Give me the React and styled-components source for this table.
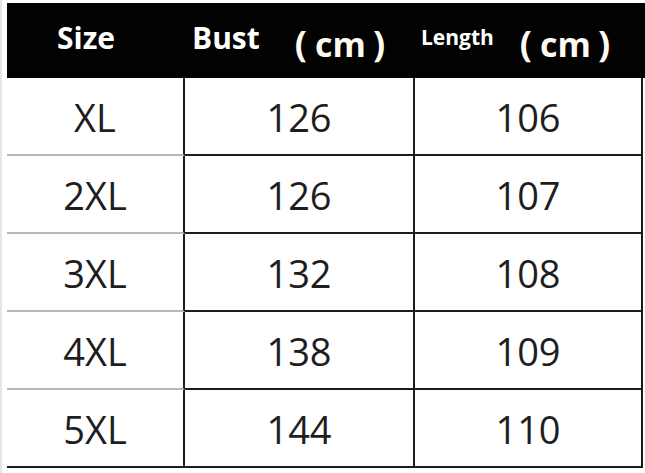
import React from 'react';
import styled, { createGlobalStyle } from 'styled-components';

const rows = [
  { size: 'XL', bust: 126, length: 106 },
  { size: '2XL', bust: 126, length: 107 },
  { size: '3XL', bust: 132, length: 108 },
  { size: '4XL', bust: 138, length: 109 },
  { size: '5XL', bust: 144, length: 110 },
];

const UnitLabel = ({ gap }) => (
  <Unit $gap={gap}>
    <Paren $side="left">(</Paren>cm<Paren $side="right">)</Paren>
  </Unit>
);

export default function App() {
  return (
    <Page>
      <GlobalStyle />
      <Table>
        <Header>
          <HeadCell $center>
            <HeadLabel>Size</HeadLabel>
          </HeadCell>
          <HeadCell>
            <HeadLabel $pad={7}>Bust</HeadLabel>
            <UnitLabel gap={35} />
          </HeadCell>
          <HeadCell>
            <SmallLabel>Length</SmallLabel>
            <UnitLabel gap={26} />
          </HeadCell>
        </Header>
        {rows.map((row, i) => (
          <Row key={row.size}>
            <Cell $muted={i < rows.length - 1}>{row.size}</Cell>
            <Cell>{row.bust}</Cell>
            <Cell>{row.length}</Cell>
          </Row>
        ))}
      </Table>
    </Page>
  );
}

const GlobalStyle = createGlobalStyle`
  html, body {
    margin: 0;
    padding: 0;
    background: #fff;
  }
  body {
    font-family: "Open Sans", "Liberation Sans", sans-serif;
  }
`;

const Page = styled.div`
  width: 645px;
  height: 473px;
  box-sizing: border-box;
  padding: 3px 0 0 5px;
  background: #fff;
  border-left: 2px solid #e4e4e4;
  overflow: hidden;
`;

const Table = styled.div`
  width: 638px;
  display: flex;
  flex-direction: column;
`;

const Header = styled.div`
  display: grid;
  grid-template-columns: 178px 230px 228px;
  height: 75px;
  background: #020202;
  color: #fff;
  font-weight: 700;
`;

const HeadCell = styled.div`
  display: flex;
  align-items: center;
  justify-content: ${p => (p.$center ? 'center' : 'flex-start')};
  padding-right: ${p => (p.$center ? '20px' : '0')};
`;

const HeadLabel = styled.span`
  font-size: 30px;
  line-height: 1;
  padding-left: ${p => p.$pad || 0}px;
  margin-bottom: 6px;
`;

const SmallLabel = styled.span`
  font-size: 21px;
  line-height: 1;
  padding-left: 6px;
  margin-bottom: 6px;
`;

const Unit = styled.span`
  font-size: 34px;
  line-height: 1;
  margin-left: ${p => p.$gap}px;
  margin-top: 6px;
  color: #fffaf0;
`;

const Paren = styled.span`
  font-size: 36px;
  margin-right: ${p => (p.$side === 'left' ? '8px' : '0')};
  margin-left: ${p => (p.$side === 'right' ? '7px' : '0')};
`;

const Row = styled.div`
  display: grid;
  grid-template-columns: 178px 230px 228px;
  height: 78px;
`;

const Cell = styled.div`
  box-sizing: border-box;
  display: flex;
  align-items: center;
  justify-content: center;
  border-right: 2px solid #1c1c1c;
  border-bottom: 2px solid ${p => (p.$muted ? '#b8b8b8' : '#1c1c1c')};
  font-size: 38px;
  color: #1e1e1e;
  padding-top: 2px;
`;
